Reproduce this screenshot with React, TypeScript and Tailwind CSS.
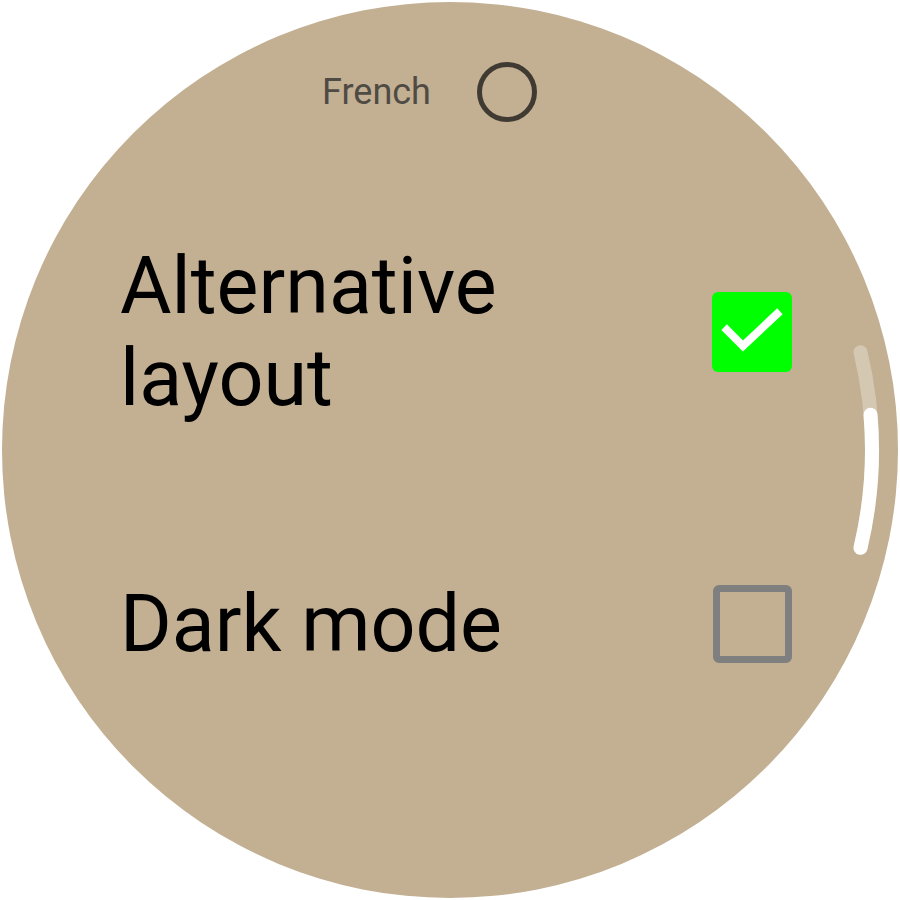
import { useState } from 'react'

const font = { fontFamily: 'Roboto, "Noto Sans", sans-serif' }

function Check({ checked, onToggle }: { checked: boolean; onToggle: () => void }) {
  if (checked) {
    return (
      <button onClick={onToggle} className="w-[80px] h-[80px] rounded-[6px] bg-[#00ff00] flex items-center justify-center shrink-0">
        <svg width="80" height="80" viewBox="0 0 80 80">
          <path d="M15 38 L31 54 L65 22" fill="none" stroke="#ffffff" strokeWidth="8" strokeLinecap="square" strokeLinejoin="miter" />
        </svg>
      </button>
    )
  }
  return (
    <button onClick={onToggle} className="w-[79px] h-[78px] rounded-[6px] border-[7px] border-[#7f7f7f] shrink-0" />
  )
}

export default function App() {
  const [alt, setAlt] = useState(true)
  const [dark, setDark] = useState(false)

  return (
    <div className="w-[900px] h-[900px] bg-white relative overflow-hidden" style={font}>
      <div className="w-[896px] h-[896px] ml-[2px] mt-[2px] rounded-full bg-[#c3b093] flex flex-col pt-[60px]">
        {/* language option */}
        <div className="flex items-center pl-[320px] gap-[46px]">
          <span className="text-[36px] leading-[44px] text-[#4f4b44]">French</span>
          <div className="w-[60px] h-[60px] rounded-full border-[5px] border-[#3f3a32]" />
        </div>

        <div className="flex items-center justify-between pl-[118px] pr-[106px] mt-[118px]">
          <span className="text-[79px] leading-[92px] text-black">
            Alternative
            <br />
            layout
          </span>
          <Check checked={alt} onToggle={() => setAlt(!alt)} />
        </div>

        <div className="flex items-center justify-between pl-[118px] pr-[106px] mt-[154px]">
          <span className="text-[79px] leading-[92px] text-black">Dark mode</span>
          <Check checked={dark} onToggle={() => setDark(!dark)} />
        </div>
      </div>

      {/* scroll indicator */}
      <svg className="absolute left-0 top-0 pointer-events-none" width="900" height="900" viewBox="0 0 900 900">
        <path d="M860.5 352.2 A422 422 0 0 1 860.5 547.8" fill="none" stroke="#ffffff" strokeOpacity="0.3" strokeWidth="14" strokeLinecap="round" />
        <path d="M870.5 414.7 A422 422 0 0 1 860.5 547.8" fill="none" stroke="#ffffff" strokeWidth="14" strokeLinecap="round" />
      </svg>
    </div>
  )
}
